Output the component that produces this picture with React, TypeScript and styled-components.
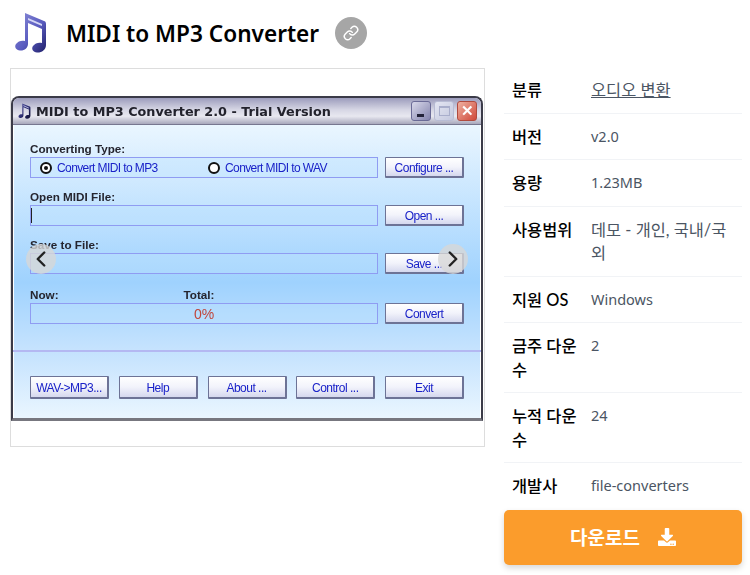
import styled, { createGlobalStyle } from 'styled-components'
import { FaDownload } from 'react-icons/fa'
import { Link as LinkIcon, ChevronLeft, ChevronRight } from 'lucide-react'

const GlobalStyle = createGlobalStyle`
  body {
    margin: 0;
    background: #fff;
    font-family: "Noto Sans", "Noto Sans CJK KR", sans-serif;
    color: #111827;
  }
`

const Page = styled.div`
  width: 750px;
  height: 575px;
  overflow: hidden;
`

const Header = styled.header`
  display: flex;
  align-items: center;
  height: 68px;
  padding: 0 0 2px 14px;
  box-sizing: border-box;
`

const Title = styled.h1`
  margin: 0 16px 0 16px;
  font-size: 22.6px;
  font-weight: 600;
  color: #000;
`

const LinkBadge = styled.span`
  width: 32px;
  height: 32px;
  border-radius: 50%;
  background: #a6a6a6;
  color: #fff;
  display: flex;
  align-items: center;
  justify-content: center;
`

const Main = styled.main`
  display: flex;
  align-items: flex-start;
  padding-left: 10px;
`

const Gallery = styled.section`
  position: relative;
  width: 475px;
  height: 379px;
  box-sizing: border-box;
  border: 1px solid #ddd;
  padding-top: 27px;
`

const ArrowButton = styled.span<{ $side: 'left' | 'right' }>`
  position: absolute;
  top: 175px;
  ${(p) => (p.$side === 'left' ? 'left: 15px;' : 'right: 16px;')}
  width: 30px;
  height: 30px;
  border-radius: 50%;
  background: rgba(215, 215, 215, 0.8);
  color: #222;
  display: flex;
  align-items: center;
  justify-content: center;
`

const AppWindow = styled.div`
  width: 472px;
  height: 325px;
  box-sizing: border-box;
  border: 2px solid #3b3b48;
  border-bottom: 3px solid #77777f;
  border-radius: 8px 8px 0 0;
  display: flex;
  flex-direction: column;
  overflow: hidden;
  filter: blur(0.3px);
  font-family: "Liberation Sans", sans-serif;
`

const TitleBar = styled.div`
  flex: none;
  height: 26px;
  display: flex;
  align-items: center;
  gap: 4px;
  padding: 0 4px 0 5px;
  background: linear-gradient(#9c9cbc 0%, #d6d6e4 45%, #e8e8f0 70%, #a8a8bc 100%);
  border-bottom: 1px solid #777790;
`

const WindowTitle = styled.span`
  flex: 1;
  font-family: "DejaVu Sans", sans-serif;
  font-size: 12.8px;
  font-weight: 700;
  color: #22222c;
  white-space: nowrap;
`

const ControlGroup = styled.div`
  display: flex;
  gap: 3px;
`

const ControlButton = styled.span<{ $kind: 'min' | 'max' | 'close' }>`
  width: 20px;
  height: 20px;
  border-radius: 3px;
  box-sizing: border-box;
  display: flex;
  align-items: center;
  justify-content: center;
  color: #fff;
  font-size: 15px;
  font-weight: 700;
  border: 1px solid ${(p) => (p.$kind === 'close' ? '#b04a3e' : p.$kind === 'min' ? '#6a6a96' : '#b8bcd4')};
  background: ${(p) =>
    p.$kind === 'close'
      ? 'linear-gradient(135deg, #eeb0a0, #d0493a)'
      : p.$kind === 'min'
        ? 'linear-gradient(135deg, #d8d8ea, #8484ae)'
        : 'linear-gradient(135deg, #e4e6f2, #c4c8de)'};
`

const MinBar = styled.span`
  width: 7px;
  height: 3px;
  margin-top: 9px;
  margin-right: 2px;
  background: #23233a;
`

const MaxBox = styled.span`
  width: 11px;
  height: 10px;
  box-sizing: border-box;
  border: 1px solid #a9aecb;
  border-top-width: 2px;
`

const UpperPanel = styled.div`
  flex: none;
  height: 227px;
  box-sizing: border-box;
  padding: 17px 17px 0;
  background: linear-gradient(#eaf6ff 0%, #9fd2fe 70%, #c6e3fe 100%);
  border-bottom: 2px solid #b4b8f2;
  box-shadow: inset 1px 0 #fff, inset -1px 0 #fff;
  display: flex;
  flex-direction: column;
`

const LowerPanel = styled.div`
  flex: 1;
  box-sizing: border-box;
  padding: 24px 17px 0;
  background: linear-gradient(#c4e2fe, #eaf6ff);
  box-shadow: inset 1px 0 #fff, inset -1px 0 #fff;
  display: flex;
  justify-content: space-between;
`

const FieldLabel = styled.div<{ $gap?: number }>`
  display: flex;
  height: 14px;
  line-height: 14px;
  margin-top: ${(p) => p.$gap ?? 12}px;
  margin-bottom: 1px;
  font-size: 11.7px;
  font-weight: 700;
  color: #25252f;
`

const TotalLabel = styled.span`
  margin-left: 125px;
`

const FieldRow = styled.div`
  display: flex;
  justify-content: space-between;
`

const FieldBox = styled.div<{ $center?: boolean }>`
  width: 348px;
  height: 21px;
  box-sizing: border-box;
  border: 1.5px solid #8f9cf2;
  background: rgba(190, 225, 255, 0.35);
  display: flex;
  align-items: center;
  justify-content: ${(p) => (p.$center ? 'center' : 'flex-start')};
`

const Caret = styled.span`
  width: 1px;
  height: 15px;
  background: #222;
`

const RadioOption = styled.label<{ $width: number }>`
  display: flex;
  align-items: center;
  gap: 5px;
  width: ${(p) => p.$width}px;
  padding-left: 9px;
  box-sizing: border-box;
  font-size: 12px;
  letter-spacing: -0.6px;
  color: #1a22c8;
  white-space: nowrap;
`

const RadioMark = styled.span<{ $checked?: boolean }>`
  flex: none;
  width: 12px;
  height: 12px;
  box-sizing: border-box;
  border: 2px solid #111;
  border-radius: 50%;
  background: #fff;
  display: flex;
  align-items: center;
  justify-content: center;

  &::after {
    content: '';
    width: 4px;
    height: 4px;
    border-radius: 50%;
    background: ${(p) => (p.$checked ? '#111' : 'transparent')};
  }
`

const Percent = styled.span`
  font-size: 14px;
  color: #c0463c;
`

const WinButton = styled.button<{ $tall?: boolean }>`
  width: 79px;
  height: ${(p) => (p.$tall ? 23 : 21)}px;
  padding: 1px 0 0;
  box-sizing: border-box;
  border: 1px solid #6d7396;
  border-right-width: 2px;
  border-bottom-width: 2px;
  border-radius: 1px;
  background: linear-gradient(#ffffff, #f2f3fb 50%, #d5d8ee);
  font-family: "Liberation Sans", sans-serif;
  font-size: 12px;
  letter-spacing: -0.5px;
  color: #1a22c8;
  white-space: nowrap;
`

const Sidebar = styled.aside`
  width: 238px;
  margin-left: 19px;
  margin-top: -1px;
`

const InfoRow = styled.div`
  display: flex;
  padding: 11px 0;
  border-bottom: 1px solid #f1f3f6;
  font-family: "Lato", "Noto Sans CJK KR", sans-serif;
  font-size: 16.4px;
  line-height: 23.5px;

  &:last-of-type {
    border-bottom: 0;
  }
`

const InfoLabel = styled.div`
  flex: none;
  width: 87px;
  box-sizing: border-box;
  padding: 0 8px;
  font-weight: 500;
  color: #000;
`

const InfoValue = styled.div<{ $latin?: boolean }>`
  flex: 1;
  padding-right: 8px;
  color: #4b5563;
  ${(p) => p.$latin && 'font-family: "Noto Sans", sans-serif; font-size: 14.5px;'}

  a {
    color: inherit;
    text-decoration: underline;
  }
`

const DownloadButton = styled.button`
  width: 238px;
  height: 55px;
  margin-top: 1px;
  border: 0;
  border-radius: 5px;
  background: #fb9c2c;
  color: #fff;
  box-shadow: 0 3px 6px rgba(0, 0, 0, 0.16);
  display: flex;
  align-items: center;
  justify-content: center;
  gap: 18px;
  font-family: "Noto Sans", "Noto Sans CJK KR", sans-serif;
  font-size: 19px;
  font-weight: 700;
`

function MusicNote({ size, id, dark }: { size: number; id: string; dark?: boolean }) {
  return (
    <svg width={size} height={(size * 42) / 36} viewBox='0 0 36 42' aria-hidden='true'>
      <defs>
        <linearGradient id={id} x1='0' y1='0' x2='1' y2='1'>
          <stop offset='0' stopColor={dark ? '#5a5ca8' : '#8d8fd8'} />
          <stop offset='0.55' stopColor={dark ? '#2c2c70' : '#5a5cc0'} />
          <stop offset='1' stopColor={dark ? '#101030' : '#20206a'} />
        </linearGradient>
      </defs>
      <path
        d='M11 1 L30 9 C31 9 32 10 32 12 L32 33 C32 38 27 41 23 40.5 C19 40 17 37 19 34 C21 31 25 30 28 31 L28 17 L14 11 L14 32 C14 36 10 39 6 38.5 C2 38 0 35 2 32 C4 29 8 28 11 29 Z'
        fill={`url(#${id})`}
      />
      <path d='M14 6 L28 12 L28 14 L14 8 Z' fill='#d6d8f6' />
    </svg>
  )
}

const infoRows = [
  { label: '분류', value: <a href='#c'>오디오 변환</a> },
  { label: '버전', value: 'v2.0', latin: true },
  { label: '용량', value: '1.23MB', latin: true },
  { label: '사용범위', value: '데모 - 개인, 국내/국외' },
  { label: '지원 OS', value: 'Windows', latin: true },
  { label: '금주 다운수', value: '2', latin: true },
  { label: '누적 다운수', value: '24', latin: true },
  { label: '개발사', value: 'file-converters', latin: true }
]

const bottomButtons = ['WAV->MP3...', 'Help', 'About ...', 'Control ...', 'Exit']

export default function App() {
  return (
    <Page>
      <GlobalStyle />
      <Header>
        <MusicNote size={36} id='appNote' />
        <Title>MIDI to MP3 Converter</Title>
        <LinkBadge>
          <LinkIcon size={16} strokeWidth={2.2} />
        </LinkBadge>
      </Header>
      <Main>
        <Gallery>
          <AppWindow>
            <TitleBar>
              <MusicNote size={14} id='titleNote' dark />
              <WindowTitle>MIDI to MP3 Converter 2.0 - Trial Version</WindowTitle>
              <ControlGroup>
                <ControlButton $kind='min'>
                  <MinBar />
                </ControlButton>
                <ControlButton $kind='max'>
                  <MaxBox />
                </ControlButton>
                <ControlButton $kind='close'>✕</ControlButton>
              </ControlGroup>
            </TitleBar>
            <UpperPanel>
              <FieldLabel $gap={0}>Converting Type:</FieldLabel>
              <FieldRow>
                <FieldBox>
                  <RadioOption $width={168}>
                    <RadioMark $checked />
                    Convert MIDI to MP3
                  </RadioOption>
                  <RadioOption $width={170}>
                    <RadioMark />
                    Convert MIDI to WAV
                  </RadioOption>
                </FieldBox>
                <WinButton>Configure ...</WinButton>
              </FieldRow>
              <FieldLabel>Open MIDI File:</FieldLabel>
              <FieldRow>
                <FieldBox>
                  <Caret />
                </FieldBox>
                <WinButton>Open ...</WinButton>
              </FieldRow>
              <FieldLabel>Save to File:</FieldLabel>
              <FieldRow>
                <FieldBox />
                <WinButton>Save ...</WinButton>
              </FieldRow>
              <FieldLabel $gap={14}>
                Now:
                <TotalLabel>Total:</TotalLabel>
              </FieldLabel>
              <FieldRow>
                <FieldBox $center>
                  <Percent>0%</Percent>
                </FieldBox>
                <WinButton>Convert</WinButton>
              </FieldRow>
            </UpperPanel>
            <LowerPanel>
              {bottomButtons.map((label) => (
                <WinButton key={label} $tall>
                  {label}
                </WinButton>
              ))}
            </LowerPanel>
          </AppWindow>
          <ArrowButton $side='left'>
            <ChevronLeft size={26} strokeWidth={2.2} />
          </ArrowButton>
          <ArrowButton $side='right'>
            <ChevronRight size={26} strokeWidth={2.2} />
          </ArrowButton>
        </Gallery>
        <Sidebar>
          {infoRows.map((row) => (
            <InfoRow key={row.label}>
              <InfoLabel>{row.label}</InfoLabel>
              <InfoValue $latin={row.latin}>{row.value}</InfoValue>
            </InfoRow>
          ))}
          <DownloadButton>
            다운로드
            <FaDownload size={18} />
          </DownloadButton>
        </Sidebar>
      </Main>
    </Page>
  )
}
